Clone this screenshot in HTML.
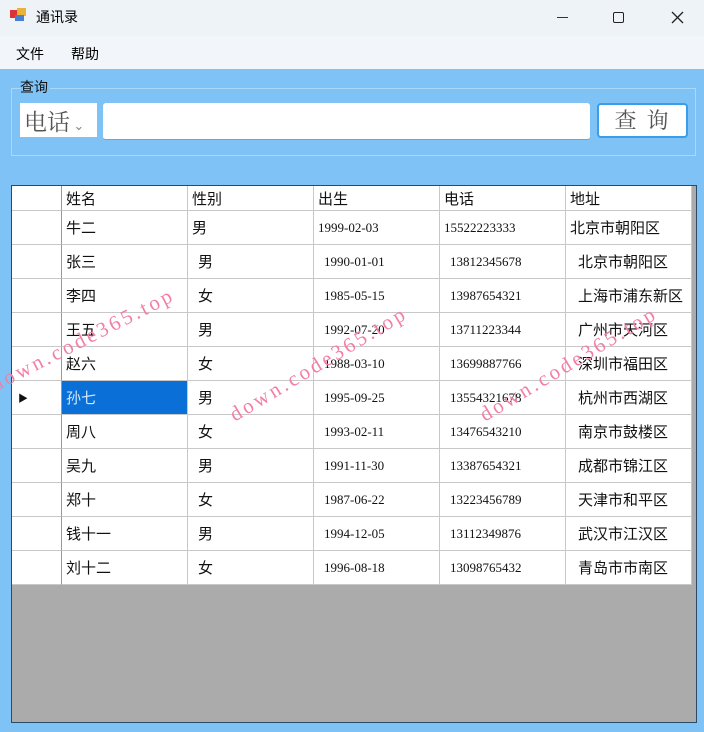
<!DOCTYPE html>
<html><head><meta charset="utf-8"><style>
*{margin:0;padding:0;box-sizing:border-box}
body{width:704px;height:732px;overflow:hidden;background:#7fc3f6;font-family:"Liberation Sans","Noto Sans CJK SC",sans-serif;position:relative}
.title{position:absolute;left:0;top:0;width:704px;height:36px;background:#eef3f8}
.menu{position:absolute;left:0;top:36px;width:704px;height:33px;background:#f2f5f9;font-size:14px}
.abs{position:absolute}
.grid{position:absolute;left:11px;top:185px;width:686px;height:538px;background:#ababab;border:1px solid #2a4a66}
.c{position:absolute;background:#fff;border-right:1px solid #c8c8c8;border-bottom:1px solid #c8c8c8;font-size:15px;color:#111;padding-left:6px;display:flex;align-items:center;font-family:"Liberation Sans","Noto Sans CJK SC",sans-serif}
.wm{position:absolute;color:#f27fa5;font-family:"Liberation Serif",serif;font-size:21px;letter-spacing:3px;transform-origin:left bottom;white-space:nowrap}
</style></head><body>
<div class="title">
 <div class="abs" style="left:10px;top:10px;width:8px;height:8px;background:#d33"></div>
 <div class="abs" style="left:17px;top:8px;width:9px;height:8px;background:#e9b33a"></div>
 <div class="abs" style="left:15px;top:15px;width:9px;height:6px;background:#4a7ed0"></div>
 <div class="abs" style="left:36px;top:7px;font-size:14px">通讯录</div>
 <div class="abs" style="left:557px;top:17px;width:11px;height:1px;background:#333"></div>
 <div class="abs" style="left:613px;top:12px;width:11px;height:11px;border:1.5px solid #222;border-radius:2px"></div>
 <svg class="abs" style="left:671px;top:11px" width="13" height="13"><path d="M1 1L12 12M12 1L1 12" stroke="#222" stroke-width="1.3"/></svg>
</div>
<div class="menu"><span class="abs" style="left:16px;top:8px">文件</span><span class="abs" style="left:71px;top:8px">帮助</span></div>
<div class="abs" style="left:20px;top:77px;font-size:14px;color:#111">查询</div>
<div class="abs" style="left:11px;top:88px;width:685px;height:68px;border:1px solid #a8d8fb;border-top:none"></div>
<div class="abs" style="left:11px;top:88px;width:10px;height:1px;background:#a8d8fb"></div>
<div class="abs" style="left:50px;top:88px;width:646px;height:1px;background:#a8d8fb"></div>
<div class="abs" style="left:20px;top:103px;width:77px;height:34px;background:#fff;font-size:23px;color:#555;padding:1px 0 0 4px;font-family:'Noto Serif CJK SC',serif">电话<span style="font-size:13px;color:#888"> ⌄</span></div>
<div class="abs" style="left:103px;top:103px;width:487px;height:37px;background:#fff;border-radius:3px;border-bottom:1px solid #999"></div>
<div class="abs" style="left:597px;top:103px;width:91px;height:35px;background:#fff;border:2px solid #3b9de8;border-radius:4px;font-size:22px;color:#555;text-align:center;line-height:30px;font-family:'Noto Serif CJK SC',serif;letter-spacing:10px;padding-left:8px">查询</div>
<div class="grid"></div>
<div id="t"></div>
<div class="wm" style="left:-2px;top:372px;transform:rotate(-27deg)">down.code365.top</div>
<div class="wm" style="left:238px;top:402px;transform:rotate(-31deg)">down.code365.top</div>
<div class="wm" style="left:488px;top:402px;transform:rotate(-31deg)">down.code365.top</div>
<script>
var rows=[["姓名","性别","出生","电话","地址"],["牛二","男","1999-02-03","15522223333","北京市朝阳区"],["张三","男","1990-01-01","13812345678","北京市朝阳区"],["李四","女","1985-05-15","13987654321","上海市浦东新区"],["王五","男","1992-07-20","13711223344","广州市天河区"],["赵六","女","1988-03-10","13699887766","深圳市福田区"],["孙七","男","1995-09-25","13554321678","杭州市西湖区"],["周八","女","1993-02-11","13476543210","南京市鼓楼区"],["吴九","男","1991-11-30","13387654321","成都市锦江区"],["郑十","女","1987-06-22","13223456789","天津市和平区"],["钱十一","男","1994-12-05","13112349876","武汉市江汉区"],["刘十二","女","1996-08-18","13098765432","青岛市市南区"]];
var xs=[12,62,188,314,440,566,692],h="";
for(var r=0;r<rows.length;r++){var y=r==0?186:211+(r-1)*34,hh=r==0?25:34;
h+='<div class="c" style="left:12px;top:'+y+'px;width:50px;height:'+hh+'px;border-right:1px solid #999">'+(r==6?'<span style="font-size:10px">▶</span>':'')+'</div>';
for(var c=0;c<5;c++){var sel=(r==6&&c==0);var pad=(r<=1)?4:(c==0?4:(c==4?12:10));
h+='<div class="c" style="left:'+xs[c+1]+'px;top:'+y+'px;width:'+(xs[c+2]-xs[c+1])+'px;height:'+hh+'px;padding-left:'+pad+'px;'+(c>=2&&c<=3&&r>0?'font-size:13px;font-family:\'Liberation Serif\',serif;':'')+(c==4&&r>0?'font-size:15px;':'')+(sel?'background:#0a6fd6;color:#cfe8ff;':'')+'">'+rows[r][c]+'</div>';}}
document.getElementById('t').innerHTML=h;
</script>
</body></html>
